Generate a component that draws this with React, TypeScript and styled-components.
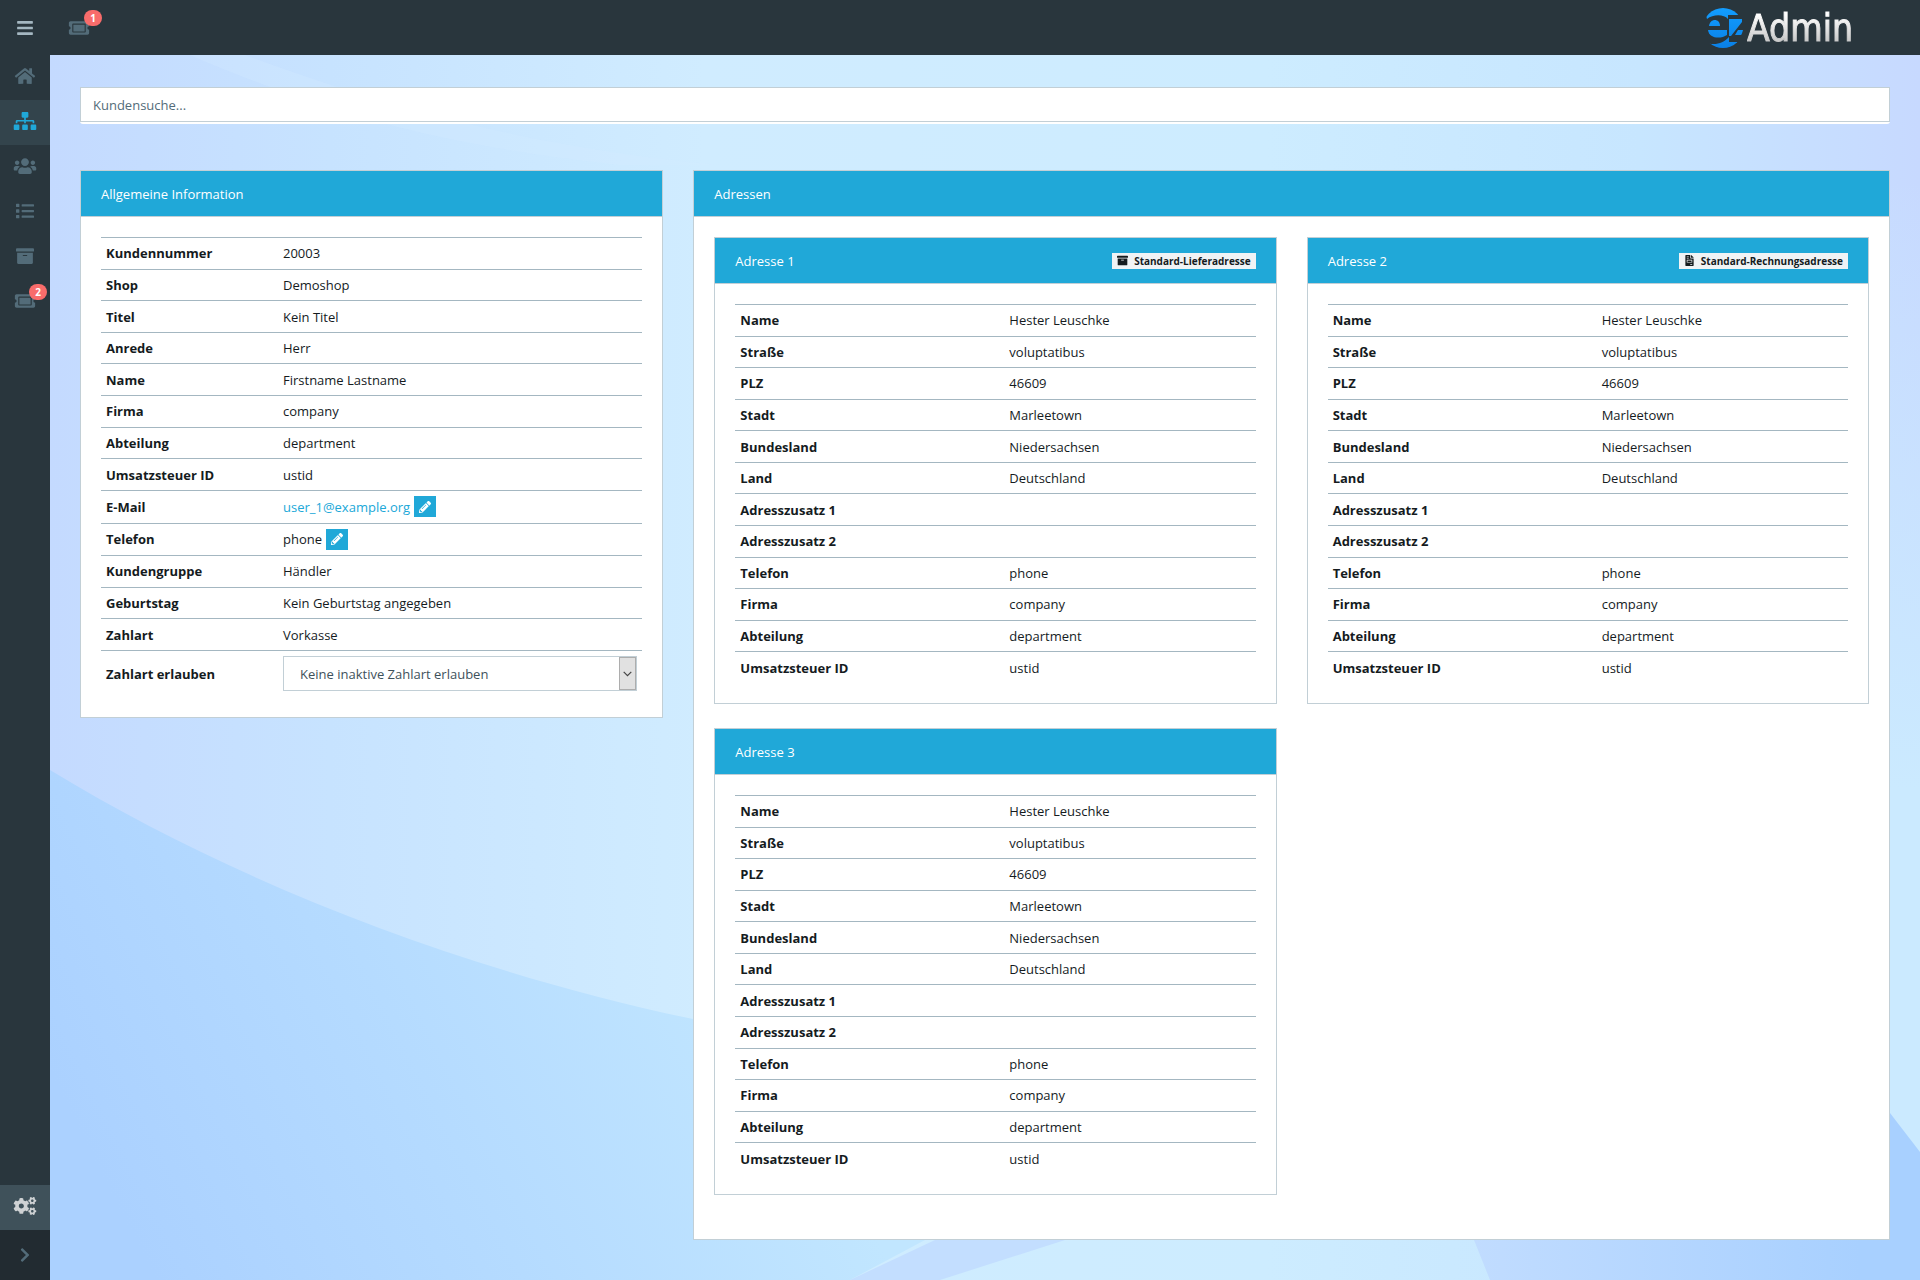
import React from "react";
import styled, { createGlobalStyle } from "styled-components";
import type { IconType } from "react-icons";
import {
  FaArchive,
  FaBars,
  FaChevronRight,
  FaCogs,
  FaFileInvoice,
  FaHome,
  FaList,
  FaPencilAlt,
  FaSitemap,
  FaTicketAlt,
  FaUsers,
} from "react-icons/fa";

const color = {
  dark: "#29363d",
  darker: "#222b31",
  active: "#33444c",
  settings: "#3f515a",
  muted: "#536c79",
  primary: "#20a8d8",
  danger: "#f86c6b",
  text: "#151b1e",
  line: "#a4b7c1",
  border: "#c2cfd6",
  light: "#f0f3f5",
};

const GlobalStyle = createGlobalStyle`
  *, *::before, *::after { box-sizing: border-box; }
  body {
    margin: 0;
    color: ${color.text};
    background: #c6e4ff;
    font: 13px/20px "Open Sans", "Noto Sans", sans-serif;
  }
  button, input, select { font: inherit; }
`;

const Shell = styled.div`
  display: grid;
  grid-template: 55px 1fr / 50px 1fr;
  min-height: 100vh;
`;

const Topbar = styled.header`
  grid-column: 1 / -1;
  display: flex;
  align-items: center;
  background: ${color.dark};
`;

const BarButton = styled.button<{ $width: number; $bright?: boolean }>`
  position: relative;
  display: flex;
  align-items: center;
  justify-content: center;
  width: ${(p) => p.$width}px;
  height: 55px;
  padding: 0;
  border: 0;
  background: none;
  color: ${(p) => (p.$bright ? color.line : color.muted)};
  cursor: pointer;

  svg {
    width: 24px;
    height: 18px;
  }
`;

const CountBadge = styled.span<{ $top: number; $right: number }>`
  position: absolute;
  top: ${(p) => p.$top}px;
  right: ${(p) => p.$right}px;
  min-width: 18px;
  padding: 0 6px;
  border-radius: 10px;
  background: ${color.danger};
  color: #fff;
  font-size: 10px;
  font-weight: 700;
  line-height: 16px;
  text-align: center;
`;

const Brand = styled.a`
  display: flex;
  align-items: center;
  gap: 4px;
  margin-left: auto;
  padding-right: 67px;
  text-decoration: none;
`;

const BrandName = styled.span`
  padding-top: 2px;
  background: linear-gradient(#ffffff 25%, #c4c4c4 80%);
  background-clip: text;
  -webkit-background-clip: text;
  -webkit-text-stroke: 1px transparent;
  color: transparent;
  font-family: "DejaVu Sans Condensed", "DejaVu Sans", sans-serif;
  font-size: 37px;
  line-height: 50px;
`;

const Sidebar = styled.nav`
  display: flex;
  flex-direction: column;
  background: ${color.dark};
`;

const NavLink = styled.a<{ $tone?: "active" | "settings" }>`
  position: relative;
  display: flex;
  align-items: center;
  justify-content: center;
  height: 45px;
  padding-bottom: 3px;
  background: ${(p) => (p.$tone ? color[p.$tone] : "transparent")};
  color: ${(p) =>
    p.$tone === "active" ? color.primary : p.$tone === "settings" ? "#cfd2d4" : color.muted};

  svg {
    width: 24px;
    height: 18px;
  }
`;

const SidebarFooter = styled.div`
  margin-top: auto;
`;

const ExpandButton = styled.button`
  display: flex;
  align-items: center;
  justify-content: center;
  width: 100%;
  height: 50px;
  padding: 0;
  border: 0;
  background: ${color.darker};
  color: ${color.muted};
  cursor: pointer;

  svg {
    width: 16px;
    height: 16px;
  }
`;

const Main = styled.main`
  position: relative;
  min-width: 0;
  padding: 32px 30px 0;
`;

const Backdrop = styled.svg`
  position: absolute;
  inset: 0;
  z-index: -1;
  width: 100%;
  height: 100%;
`;

const SearchBox = styled.div`
  margin-bottom: 46px;
  padding-bottom: 2px;
  border-radius: 3px;
  background: #fff;
`;

const SearchInput = styled.input`
  display: block;
  width: 100%;
  height: 35px;
  padding: 0 12px;
  border: 1px solid ${color.border};
  background: #fff;
  color: ${color.text};

  &::placeholder {
    color: ${color.muted};
    opacity: 1;
  }
`;

const Columns = styled.div`
  display: grid;
  grid-template-columns: minmax(0, 1fr) minmax(0, 2fr);
  align-items: start;
  margin: 0 -15px;
`;

const Column = styled.div`
  padding: 0 15px;
`;

const Card = styled.section`
  border: 1px solid ${color.border};
  background: #fff;
`;

const CardHeader = styled.header`
  display: flex;
  align-items: baseline;
  justify-content: space-between;
  padding: 13px 20px 12px;
  border-bottom: 1px solid ${color.border};
  background: ${color.primary};
  color: #fff;
`;

const CardTitle = styled.h2`
  margin: 0;
  font-size: 13px;
  font-weight: 400;
  line-height: 20px;
`;

const CardBody = styled.div`
  padding: 20px;
`;

const AddressGrid = styled.div`
  display: grid;
  grid-template-columns: repeat(2, minmax(0, 1fr));
  align-items: start;
  gap: 24px 30px;
  margin-bottom: 24px;
`;

const HeaderTag = styled.span`
  display: flex;
  align-items: center;
  gap: 6px;
  padding: 0 5px;
  background: ${color.light};
  color: ${color.text};
  font-size: 10px;
  font-weight: 700;
  line-height: 16px;

  svg {
    width: 11px;
    height: 11px;
  }
`;

const DataTable = styled.table<{ $height: number }>`
  width: 100%;
  height: ${(p) => p.$height}px;
  border-collapse: separate;
  border-spacing: 0;
  table-layout: fixed;
`;

const LabelCell = styled.th<{ $width: number }>`
  width: ${(p) => p.$width}px;
  padding: 5px;
  border-top: 1px solid ${color.line};
  font-weight: 700;
  text-align: left;
`;

const ValueCell = styled.td`
  padding: 5px;
  border-top: 1px solid ${color.line};
`;

const Editable = styled.div`
  display: flex;
  align-items: center;
  gap: 4px;
`;

const MailLink = styled.a`
  color: ${color.primary};
  text-decoration: none;
`;

const EditButton = styled.button`
  display: flex;
  align-items: center;
  justify-content: center;
  width: 22px;
  height: 21px;
  padding: 0;
  border: 0;
  background: ${color.primary};
  color: #fff;
  cursor: pointer;

  svg {
    width: 12px;
    height: 12px;
  }
`;

const SelectFrame = styled.div`
  position: relative;
`;

const Select = styled.select`
  display: block;
  width: 100%;
  height: 35px;
  padding: 0 30px 0 16px;
  border: 1px solid ${color.border};
  border-radius: 0;
  appearance: none;
  background: #fff;
  color: #3e515b;
`;

const SelectArrow = styled.span`
  position: absolute;
  top: 1px;
  right: 1px;
  bottom: 1px;
  display: flex;
  align-items: center;
  justify-content: center;
  width: 17px;
  border: 1px solid #adadad;
  background: #e1e1e1;
  pointer-events: none;
`;

type TableRow = { label: string; value: React.ReactNode; htmlFor?: string };

function RecordTable(props: { rows: TableRow[]; height: number; labelWidth: number }) {
  return (
    <DataTable $height={props.height}>
      <tbody>
        {props.rows.map((row) => (
          <tr key={row.label}>
            <LabelCell scope="row" $width={props.labelWidth}>
              {row.htmlFor ? <label htmlFor={row.htmlFor}>{row.label}</label> : row.label}
            </LabelCell>
            <ValueCell>{row.value}</ValueCell>
          </tr>
        ))}
      </tbody>
    </DataTable>
  );
}

const customerRows: TableRow[] = [
  { label: "Kundennummer", value: "20003" },
  { label: "Shop", value: "Demoshop" },
  { label: "Titel", value: "Kein Titel" },
  { label: "Anrede", value: "Herr" },
  { label: "Name", value: "Firstname Lastname" },
  { label: "Firma", value: "company" },
  { label: "Abteilung", value: "department" },
  { label: "Umsatzsteuer ID", value: "ustid" },
  {
    label: "E-Mail",
    value: (
      <Editable>
        <MailLink href="mailto:user_1@example.org">user_1@example.org</MailLink>
        <EditButton type="button" aria-label="E-Mail bearbeiten">
          <FaPencilAlt />
        </EditButton>
      </Editable>
    ),
  },
  {
    label: "Telefon",
    value: (
      <Editable>
        phone
        <EditButton type="button" aria-label="Telefon bearbeiten">
          <FaPencilAlt />
        </EditButton>
      </Editable>
    ),
  },
  { label: "Kundengruppe", value: "Händler" },
  { label: "Geburtstag", value: "Kein Geburtstag angegeben" },
  { label: "Zahlart", value: "Vorkasse" },
  {
    label: "Zahlart erlauben",
    htmlFor: "payment",
    value: (
      <SelectFrame>
        <Select id="payment">
          <option>Keine inaktive Zahlart erlauben</option>
        </Select>
        <SelectArrow>
          <svg width="9" height="6" viewBox="0 0 9 6" fill="none" stroke="#444" strokeWidth="1.2">
            <path d="M0.7 0.8 4.5 4.6 8.3 0.8" />
          </svg>
        </SelectArrow>
      </SelectFrame>
    ),
  },
];

const addressRows: TableRow[] = [
  { label: "Name", value: "Hester Leuschke" },
  { label: "Straße", value: "voluptatibus" },
  { label: "PLZ", value: "46609" },
  { label: "Stadt", value: "Marleetown" },
  { label: "Bundesland", value: "Niedersachsen" },
  { label: "Land", value: "Deutschland" },
  { label: "Adresszusatz 1", value: "" },
  { label: "Adresszusatz 2", value: "" },
  { label: "Telefon", value: "phone" },
  { label: "Firma", value: "company" },
  { label: "Abteilung", value: "department" },
  { label: "Umsatzsteuer ID", value: "ustid" },
];

const addresses: { title: string; tag?: string; Icon?: IconType }[] = [
  { title: "Adresse 1", tag: "Standard-Lieferadresse", Icon: FaArchive },
  { title: "Adresse 2", tag: "Standard-Rechnungsadresse", Icon: FaFileInvoice },
  { title: "Adresse 3" },
];

const navItems: { label: string; Icon: IconType; active?: boolean; count?: number }[] = [
  { label: "Start", Icon: FaHome },
  { label: "Kunden", Icon: FaSitemap, active: true },
  { label: "Benutzer", Icon: FaUsers },
  { label: "Liste", Icon: FaList },
  { label: "Archiv", Icon: FaArchive },
  { label: "Tickets", Icon: FaTicketAlt, count: 2 },
];

function LogoMark() {
  return (
    <svg width="38" height="44" viewBox="0 0 38 44" aria-hidden="true">
      <defs>
        <linearGradient id="disc" gradientUnits="userSpaceOnUse" x1="0" y1="2" x2="0" y2="42">
          <stop offset="0" stopColor="#129dff" />
          <stop offset="1" stopColor="#0a80e6" />
        </linearGradient>
        <clipPath id="round">
          <circle cx="18" cy="22" r="20" />
        </clipPath>
      </defs>
      <g fill="url(#disc)">
        {/* upper and lower caps of the disc */}
        <g clipPath="url(#round)">
          <path d="M-2 0H38V9H23V13C19 8 8 8 2 13Z" />
          <path d="M0 44V36C8 40 18 38 24 31V36H38V44Z" />
        </g>
        {/* the areas left free between the strokes */}
        <path d="M4 20C5 12 15 12 15 20Z" />
        <path d="M3 24H22V29C16 33 4 33 3 24Z" />
        <path d="M24 13H37V16L26 30H24V27Z" />
        <path d="M33 24H38C37 27 37 28 36 29H30Z" />
      </g>
    </svg>
  );
}

function Wallpaper() {
  return (
    <Backdrop viewBox="50 55 1870 1225" preserveAspectRatio="none" aria-hidden="true">
      <defs>
        <linearGradient id="sky">
          <stop offset="0" stopColor="#c4daff" />
          <stop offset="0.15" stopColor="#c7e3ff" />
          <stop offset="0.35" stopColor="#d0ecff" />
          <stop offset="0.65" stopColor="#cdecff" />
          <stop offset="0.85" stopColor="#c7e6ff" />
          <stop offset="1" stopColor="#c7d9ff" />
        </linearGradient>
        <linearGradient id="dawn" x1="0" y1="0" x2="0" y2="1">
          <stop offset="0.1" stopColor="#cbeaff" stopOpacity="0" />
          <stop offset="0.6" stopColor="#cbeaff" />
        </linearGradient>
        <linearGradient id="wave" gradientUnits="userSpaceOnUse" x1="130" y1="1230" x2="720" y2="930">
          <stop offset="0" stopColor="#abd1ff" />
          <stop offset="0.5" stopColor="#b5dbff" />
          <stop offset="1" stopColor="#c1e6ff" />
        </linearGradient>
        <linearGradient id="shore" gradientUnits="userSpaceOnUse" x1="1470" y1="0" x2="1860" y2="0">
          <stop offset="0" stopColor="#c1dcff" />
          <stop offset="1" stopColor="#a8d0ff" />
        </linearGradient>
      </defs>
      <rect x="50" y="55" width="1870" height="1225" fill="url(#sky)" />
      <rect x="1700" y="55" width="220" height="1225" fill="url(#dawn)" />
      <path d="M245 55C420 120 560 150 720 165H620C440 145 330 115 190 55Z" fill="#d4ebff" opacity="0.3" />
      <path d="M50 770C230 880 460 970 693 1019L1000 1200 850 1280H50Z" fill="url(#wave)" />
      <path d="M850 1280 935 1240H1065L940 1280Z" fill="#c3deff" />
      <path d="M1470 1230 1890 1113 1920 1152V1280H1490Z" fill="url(#shore)" />
    </Backdrop>
  );
}

export default function App() {
  return (
    <>
      <GlobalStyle />
      <Shell>
        <Topbar>
          <BarButton type="button" aria-label="Menü" $width={50} $bright>
            <FaBars />
          </BarButton>
          <BarButton type="button" aria-label="Tickets" $width={58}>
            <FaTicketAlt />
            <CountBadge $top={10} $right={6}>1</CountBadge>
          </BarButton>
          <Brand href="#" aria-label="ez Admin">
            <LogoMark />
            <BrandName>Admin</BrandName>
          </Brand>
        </Topbar>

        <Sidebar aria-label="Hauptnavigation">
          {navItems.map(({ label, Icon, active, count }) => (
            <NavLink
              key={label}
              href="#"
              aria-label={label}
              aria-current={active ? "page" : undefined}
              $tone={active ? "active" : undefined}
            >
              <Icon />
              {count && <CountBadge $top={4} $right={3}>{count}</CountBadge>}
            </NavLink>
          ))}
          <SidebarFooter>
            <NavLink href="#" aria-label="Einstellungen" $tone="settings">
              <FaCogs />
            </NavLink>
            <ExpandButton type="button" aria-label="Navigation ausklappen">
              <FaChevronRight />
            </ExpandButton>
          </SidebarFooter>
        </Sidebar>

        <Main>
          <Wallpaper />
          <SearchBox>
            <SearchInput type="search" placeholder="Kundensuche..." aria-label="Kundensuche" />
          </SearchBox>
          <Columns>
            <Column>
              <Card>
                <CardHeader>
                  <CardTitle>Allgemeine Information</CardTitle>
                </CardHeader>
                <CardBody>
                  <RecordTable rows={customerRows} height={460} labelWidth={177} />
                </CardBody>
              </Card>
            </Column>
            <Column>
              <Card>
                <CardHeader>
                  <CardTitle>Adressen</CardTitle>
                </CardHeader>
                <CardBody>
                  <AddressGrid>
                    {addresses.map(({ title, tag, Icon }) => (
                      <Card key={title}>
                        <CardHeader>
                          <CardTitle>{title}</CardTitle>
                          {tag && Icon && (
                            <HeaderTag>
                              <Icon />
                              {tag}
                            </HeaderTag>
                          )}
                        </CardHeader>
                        <CardBody>
                          <RecordTable rows={addressRows} height={379} labelWidth={269} />
                        </CardBody>
                      </Card>
                    ))}
                  </AddressGrid>
                </CardBody>
              </Card>
            </Column>
          </Columns>
        </Main>
      </Shell>
    </>
  );
}
